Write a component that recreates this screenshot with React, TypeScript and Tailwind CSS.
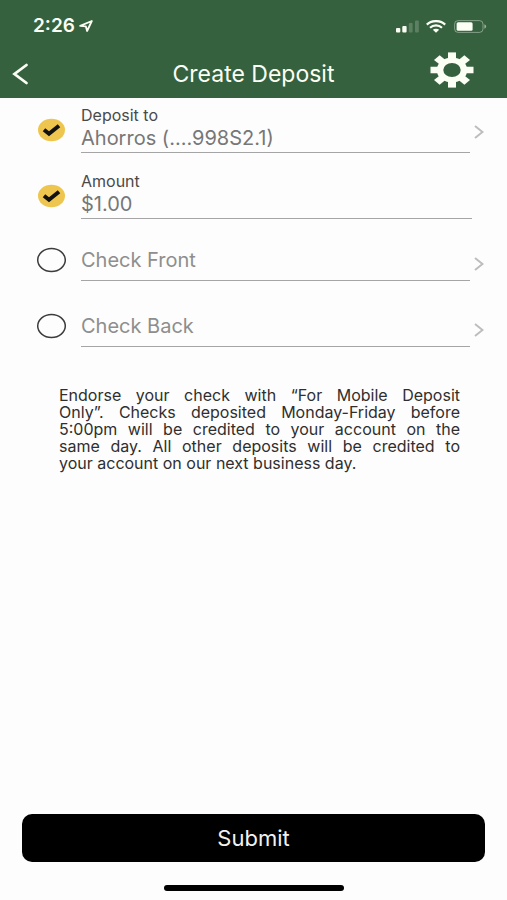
import { useId } from "react";
import type { ReactNode } from "react";

const NOTICE = [
  "Endorse your check with “For Mobile Deposit",
  "Only”. Checks deposited Monday-Friday before",
  "5:00pm will be credited to your account on the",
  "same day. All other deposits will be credited to",
];

const GEAR_TEETH = [0, 45, 90, 135, 180, 225, 270, 315];

function StatusBar() {
  return (
    <div className="flex h-[52px] items-center justify-between pr-5 pl-[33px]">
      <div className="flex items-center gap-1">
        <span className="text-[19px] leading-5 font-semibold">2:26</span>
        <svg viewBox="0 0 14 12" className="h-3 w-[14px]" fill="none" stroke="currentColor" strokeWidth="1.8" strokeLinejoin="round" aria-hidden>
          <path d="M12.8 1 1.2 5.8l5.6.5 1.3 4.7z" />
        </svg>
      </div>
      <div className="flex items-center gap-[7px]">
        <svg viewBox="0 0 24 13" className="h-[13px] w-6" fill="currentColor" aria-hidden>
          <rect x="1" y="8" width="4.300" height="4.500" rx="1" />
          <rect x="7.300" y="6" width="4.300" height="6.500" rx="1" />
          <rect x="13.800" y="3" width="3.800" height="9.500" rx="1" opacity=".2" />
          <rect x="20" y="0.500" width="3.800" height="12" rx="1" opacity=".2" />
        </svg>
        <svg viewBox="0 0 20 13" className="h-[13px] w-5" fill="none" stroke="currentColor" strokeWidth="2.200" aria-hidden>
          <path d="M.8 4.6C5.8-.1 14.2-.1 19.2 4.6" />
          <path d="M4 7.7c3.300-3 8.700-3 12 0" />
          <path d="M6.800 9.800c1.900-1.500 4.500-1.500 6.400 0L10 12.800z" fill="currentColor" stroke="none" />
        </svg>
        <svg viewBox="0 0 34 13" className="h-[13px] w-[34px]" fill="none" aria-hidden>
          <rect x="1.600" y=".6" width="28.400" height="11.800" rx="3.500" stroke="currentColor" strokeOpacity=".4" />
          <rect x="3.600" y="2.300" width="16" height="8.400" rx="1.500" fill="currentColor" />
          <path d="M31.400 4.300c2.400.8 2.400 3.600 0 4.400z" fill="currentColor" fillOpacity=".5" />
        </svg>
      </div>
    </div>
  );
}

function GearIcon() {
  return (
    <svg viewBox="-22 -22 44 44" preserveAspectRatio="none" className="h-9 w-11" fill="currentColor" aria-hidden>
      {GEAR_TEETH.map((angle) => (
        <path key={angle} d="M-4-21.500h8V-12h-8z" transform={`rotate(${angle})`} />
      ))}
      <circle r="12" fill="none" stroke="currentColor" strokeWidth="6.600" />
    </svg>
  );
}

function StepMark({ done }: { done: boolean }) {
  return (
    <svg viewBox="0 0 30 26" className="h-[26px] w-[30px] shrink-0" fill="none" role="img" aria-label={done ? "Completed" : "Not completed"}>
      {done ? (
        <>
          <ellipse cx="15.500" cy="13" rx="13.500" ry="11.200" fill="#eec64f" />
          <path d="m8 12.800 5 4 10-8" stroke="#111" strokeWidth="4" />
        </>
      ) : (
        <ellipse cx="15.500" cy="13" rx="13.800" ry="11.400" stroke="#3c3c3c" strokeWidth="1.500" />
      )}
    </svg>
  );
}

function Chevron() {
  return (
    <svg viewBox="0 0 10 14" className="h-[14px] w-[10px] shrink-0" fill="none" stroke="#bdbdbd" strokeWidth="2" aria-hidden>
      <path d="m1 1 7.500 6L1 13" />
    </svg>
  );
}

function LinkRow({ label, value }: { label: string; value?: string }) {
  const done = value !== undefined;
  return (
    <button
      type="button"
      className={`flex w-full items-center text-left ${done ? "mb-5 h-[46px]" : "mb-6 h-[42px]"}`}
    >
      <StepMark done={done} />
      <span className="ml-[15px] flex h-full flex-1 flex-col justify-between border-b border-[#a5a5a5]">
        {done ? (
          <>
            <span className="text-[16px] leading-4 text-[#4a4a4a]">{label}</span>
            <span className="pb-1 text-[20px] leading-5 text-[#777]">{value}</span>
          </>
        ) : (
          <span className="pt-[11px] text-[20px] leading-5 text-[#8e8e8e]">{label}</span>
        )}
      </span>
      <span className={`ml-1 flex ${done ? "pt-1" : "pt-2"}`}>
        <Chevron />
      </span>
    </button>
  );
}

function AmountRow() {
  const id = useId();
  return (
    <div className="mb-5 flex h-[46px] items-center pr-3">
      <StepMark done />
      <div className="ml-[15px] flex h-full min-w-0 flex-1 flex-col justify-between border-b border-[#a5a5a5]">
        <label htmlFor={id} className="text-[16px] leading-4 text-[#4a4a4a]">
          Amount
        </label>
        <input
          id={id}
          defaultValue="$1.00"
          inputMode="decimal"
          className="h-6 w-full bg-transparent pb-1 text-[20px] leading-5 text-[#777] outline-none"
        />
      </div>
    </div>
  );
}

function Screen({ children }: { children: ReactNode }) {
  return (
    <div className="flex min-h-screen flex-col bg-[#fdfdfd] font-['Inter','Liberation_Sans',sans-serif]">{children}</div>
  );
}

export default function App() {
  return (
    <Screen>
      <header className="bg-[#36613e] text-[#fbfff4]">
        <StatusBar />
        <div className="grid h-[46px] grid-cols-[1fr_auto_1fr] items-start">
          <button type="button" aria-label="Back" className="ml-3 w-fit pt-[11px]">
            <svg viewBox="0 0 17 22" className="h-[22px] w-[17px]" fill="none" stroke="currentColor" strokeWidth="2.800" strokeLinecap="round" aria-hidden>
              <path d="M14.500 2 2.500 11l12 9" />
            </svg>
          </button>
          <h1 className="pt-[10px] text-[23px] leading-6">Create Deposit</h1>
          <button type="button" aria-label="Settings" className="mr-[33px] w-fit justify-self-end">
            <GearIcon />
          </button>
        </div>
      </header>

      <main className="flex flex-1 flex-col">
        <form className="flex flex-1 flex-col" onSubmit={(e) => e.preventDefault()}>
          <div className="pt-[9px] pr-[23px] pl-9">
            <LinkRow label="Deposit to" value="Ahorros (....998S2.1)" />
            <AmountRow />
            <LinkRow label="Check Front" />
            <LinkRow label="Check Back" />
          </div>

          <p className="mt-4 mr-[47px] ml-[59px] text-[16px] leading-[17px] text-[#2f2f2f]">
            {NOTICE.map((line) => (
              <span key={line} className="block text-justify [text-align-last:justify]">
                {line}{" "}
              </span>
            ))}
            your account on our next business day.
          </p>

          <button
            type="submit"
            className="mx-[22px] mt-auto h-12 rounded-[10px] bg-black text-[22px] leading-6 text-[#f2f2f2]"
          >
            Submit
          </button>
        </form>
      </main>

      <div className="mx-auto mt-[23px] mb-[9px] h-[6px] w-[180px] rounded-full bg-black" />
    </Screen>
  );
}
